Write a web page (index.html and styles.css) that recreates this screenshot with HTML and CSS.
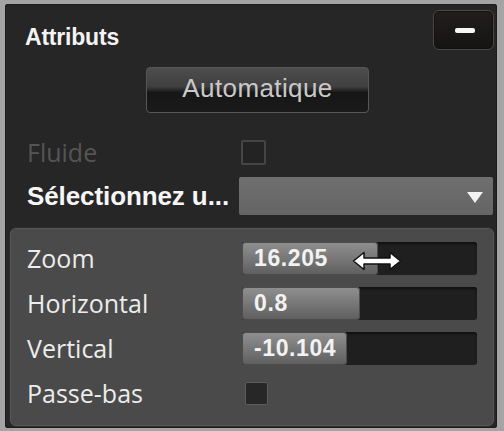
FILE: index.html
```html
<!DOCTYPE html>
<html lang="fr">
<head>
<meta charset="utf-8">
<title>Attributs</title>
<link rel="stylesheet" href="styles.css">
</head>
<body>
<div class="frame">
  <div class="panel">
    <div class="header">
      <span class="title">Attributs</span>
      <button class="collapse" type="button"><span class="bar"></span></button>
    </div>
    <div class="auto-row">
      <button class="auto" type="button">Automatique</button>
    </div>
    <div class="row fluide-row">
      <span class="label dim">Fluide</span>
      <span class="check check-off"></span>
    </div>
    <div class="row select-row">
      <span class="label strong">Sélectionnez u...</span>
      <div class="dropdown">
        <svg class="tri" width="16" height="11" viewBox="0 0 16 11"><polygon points="0,0 16,0 8,11" fill="#f2f2f2"/></svg>
      </div>
    </div>
    <div class="sub">
      <div class="srow">
        <span class="label">Zoom</span>
        <div class="slider">
          <div class="fill" style="width:136px"><span class="val">16.205</span></div>
          <svg class="cursor" width="50" height="20" viewBox="0 0 50 20">
            <path d="M1.5 10 L12 1.5 L12 7 L38 7 L38 1.5 L48.5 10 L38 18.5 L38 13 L12 13 L12 18.5 Z" fill="#ffffff" stroke="#111" stroke-width="1.5" stroke-linejoin="round"/>
          </svg>
        </div>
      </div>
      <div class="srow">
        <span class="label">Horizontal</span>
        <div class="slider">
          <div class="fill" style="width:118px"><span class="val">0.8</span></div>
        </div>
      </div>
      <div class="srow">
        <span class="label">Vertical</span>
        <div class="slider">
          <div class="fill" style="width:105px"><span class="val">-10.104</span></div>
        </div>
      </div>
      <div class="srow crow">
        <span class="label">Passe-bas</span>
        <span class="check check-sub"></span>
      </div>
    </div>
  </div>
</div>
</body>
</html>
```

FILE: styles.css
```css
html, body {
  margin: 0;
  padding: 0;
  width: 504px;
  height: 431px;
  overflow: hidden;
  background: #a4a4a4;
}

.frame {
  box-sizing: border-box;
  height: 431px;
  padding: 4px 7px 3px 5px;
}

.panel {
  box-sizing: border-box;
  height: 100%;
  background: #262626;
  border-radius: 3px;
  box-shadow: inset 0 0 0 1px #1c1c1c;
  display: flex;
  flex-direction: column;
  padding: 0 3px 2px 0;
}

.header {
  display: flex;
  justify-content: space-between;
  align-items: flex-start;
  padding-top: 6px;
}

.title {
  margin-left: 20px;
  margin-top: 14px;
  font-family: "Liberation Sans", Arial, sans-serif;
  font-weight: bold;
  font-size: 23px;
  line-height: 26px;
  letter-spacing: -0.2px;
  color: #f4f4f4;
}

.collapse {
  box-sizing: border-box;
  width: 61px;
  height: 40px;
  margin: 0;
  padding: 0;
  background: linear-gradient(#221e1e, #161313);
  border: 1px solid #4b4747;
  border-radius: 6px;
  box-shadow: inset 0 0 0 1px #121010;
  display: flex;
  align-items: center;
  justify-content: center;
}

.bar {
  display: block;
  width: 20px;
  height: 5px;
  border-radius: 2px;
  background: #f6f6f6;
  margin-left: 3px;
}

.auto-row {
  margin-top: 17px;
}

.auto {
  box-sizing: border-box;
  width: 223px;
  height: 46px;
  margin: 0 0 0 141px;
  padding: 0 0 4px;
  border: 1px solid #575757;
  border-radius: 4px;
  background: linear-gradient(#4d4d4d 0%, #404040 42%, #161616 56%, #1b1b1b 100%);
  font-family: "Liberation Sans", Arial, sans-serif;
  font-size: 26px;
  color: #c9c9c9;
  letter-spacing: 0.4px;
}

.row {
  display: flex;
  align-items: center;
  padding-left: 22px;
}

.label {
  font-family: "Open Sans", "Liberation Sans", sans-serif;
  font-size: 25px;
  line-height: 25px;
  color: #ececec;
  white-space: nowrap;
}

.row .label {
  width: 213px;
  flex: none;
}

.dim {
  color: #555555;
}

.strong {
  font-family: "Liberation Sans", Arial, sans-serif;
  font-weight: bold;
  font-size: 26px;
  color: #f6f6f6;
  letter-spacing: -0.1px;
}

.fluide-row {
  margin-top: 27px;
  height: 25px;
}

.check {
  display: block;
  box-sizing: border-box;
  flex: none;
}

.check-off {
  width: 25px;
  height: 25px;
  margin-left: 1px;
  border: 2px solid #454545;
  border-radius: 2px;
  background: #232323;
}

.select-row {
  margin-top: 12px;
  height: 38px;
}

.select-row .label {
  width: 212px;
}

.dropdown {
  flex: none;
  width: 254px;
  height: 38px;
  box-sizing: border-box;
  background: linear-gradient(#6f6f6f, #656565);
  border-radius: 2px;
  display: flex;
  align-items: center;
  justify-content: flex-end;
  padding-right: 10px;
}

.tri {
  display: block;
  margin-top: 3px;
}

.sub {
  flex: 1;
  margin: 13px 0 0 5px;
  box-sizing: border-box;
  background: #4a4a4a;
  border: 1px solid #575757;
  border-radius: 6px;
  box-shadow: 0 0 0 1px #2c2c2c;
  padding: 13px 0 0 16px;
  display: flex;
  flex-direction: column;
  gap: 12px;
}

.srow {
  display: flex;
  align-items: center;
  height: 33px;
}

.srow .label {
  width: 215px;
  flex: none;
}

.slider {
  position: relative;
  width: 235px;
  height: 33px;
  background: #1f1f1f;
  border-radius: 3px;
  box-shadow: inset 0 2px 2px #111;
}

.fill {
  box-sizing: border-box;
  height: 33px;
  border-radius: 4px;
  background: linear-gradient(#909090 0%, #7a7a7a 45%, #5e5e5e 100%);
  box-shadow: inset 0 0 0 1px #4c4c4c;
  display: flex;
  align-items: center;
  padding-left: 12px;
}

.val {
  font-family: "Liberation Sans", Arial, sans-serif;
  font-weight: bold;
  font-size: 23px;
  letter-spacing: 0.6px;
  color: #f2f2f2;
}

.cursor {
  position: absolute;
  left: 110px;
  top: 9px;
}

.crow {
  margin-top: 5px;
  height: 23px;
}

.check-sub {
  width: 23px;
  height: 23px;
  margin-left: 3px;
  border: 1px solid #5c5c5c;
  border-radius: 2px;
  background: #272727;
}
```
